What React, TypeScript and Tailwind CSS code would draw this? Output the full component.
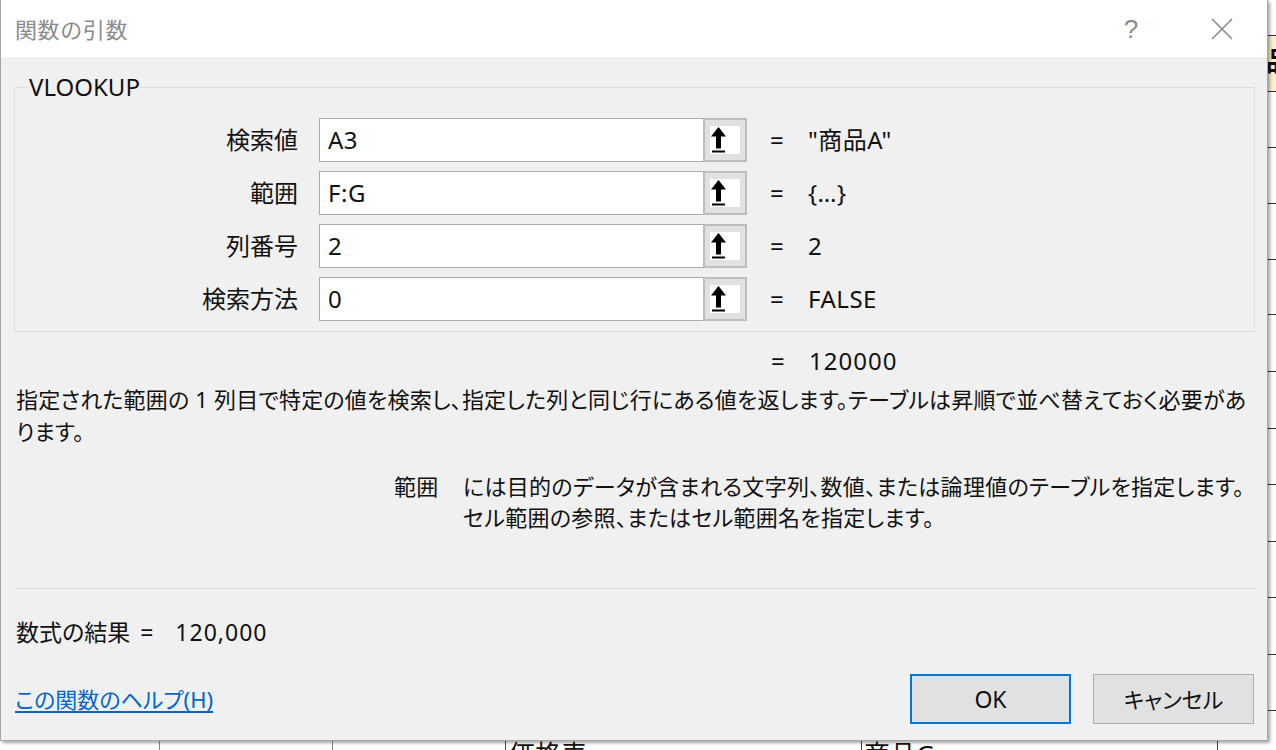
import React from "react";

type ArgRow = {
  label: string;
  value: string;
  result: string;
};

const rows: ArgRow[] = [
  { label: "検索値", value: "A3", result: '"商品A"' },
  { label: "範囲", value: "F:G", result: "{…}" },
  { label: "列番号", value: "2", result: "2" },
  { label: "検索方法", value: "0", result: "FALSE" },
];

// sheet rows behind the dialog (only edges are visible)
const sheetRows = [36, 56, 56, 56, 56, 55, 57, 57, 56, 57, 56, 57, 56, 60];

const RefButton = () => (
  <div className="w-[44px] h-[44px] -my-px -mr-px border-2 border-[#bdbdbd] bg-[#e1e1e1] flex items-center justify-center">
    <svg width="30" height="28" viewBox="0 0 30 28">
      <rect x="0" y="0" width="30" height="28" fill="#fff" />
      <polygon points="8.5,1 1,10.5 16,10.5" fill="#000" />
      <rect x="6" y="9" width="5" height="13.5" fill="#000" />
      <rect x="2" y="24.5" width="13" height="2" fill="#000" />
    </svg>
  </div>
);

const App = () => {
  return (
    <div className="relative w-[1276px] h-[750px] overflow-hidden bg-white font-['Noto_Sans','Noto_Sans_CJK_JP',sans-serif] text-[#111]">
      {/* worksheet behind the dialog */}
      <div className="flex flex-col">
        {sheetRows.map((h, i) => (
          <div
            key={i}
            className="grid grid-cols-[160px_173px_173px_356px_356px_58px] border-b border-[#333]"
            style={{ height: h }}
          >
            <div className="border-r border-[#888]" />
            <div className="border-r border-[#888]" />
            <div className="border-r border-[#444]" />
            <div className="border-r border-[#444] pt-[30px] pl-[3px] text-[26px] leading-none whitespace-nowrap">
              {i === 13 ? "価格表" : ""}
            </div>
            <div className="border-r border-[#444] pt-[30px] pl-[2px] text-[26px] leading-none whitespace-nowrap">
              {i === 13 ? "商品G" : ""}
            </div>
            <div
              className={
                i === 1
                  ? "bg-[#fdf0cf] pl-[48px] pt-[12px] text-[26px] font-bold leading-none whitespace-nowrap"
                  : ""
              }
            >
              {i === 1 ? "品名" : ""}
            </div>
          </div>
        ))}
      </div>

      {/* dialog */}
      <div className="absolute left-0 top-0 w-[1268px] h-[741px] flex flex-col bg-[#f0f0f0] border-l border-r border-b border-[#a6a6a6] shadow-[2px_2px_3px_rgba(0,0,0,0.35)]">
        <div className="h-[57px] shrink-0 bg-white flex items-center pl-[14px] pr-[25px]">
          <span className="text-[22px] text-[#8a8a8a] tracking-[0.6px] font-['Noto_Sans_CJK_JP',sans-serif]">
            関数の引数
          </span>
          <div className="ml-auto flex items-center gap-[51px]">
            <span className="w-[40px] text-center text-[26px] leading-none text-[#8a8a8a] font-['Liberation_Sans',sans-serif]">
              ?
            </span>
            <svg width="40" height="40" viewBox="0 0 40 40">
              <path d="M10 10 L30 30 M30 10 L10 30" stroke="#8a8a8a" strokeWidth="1.6" fill="none" />
            </svg>
          </div>
        </div>

        <div className="flex flex-col px-[13px] flex-1">
          <fieldset className="mt-[15px] w-[1241px] border border-[#dcdcdc] pb-[10px]">
            <legend className="ml-[13px] px-px text-[24px] leading-[30px]">VLOOKUP</legend>
            <div className="flex flex-col gap-[9px] pt-[16px]">
              {rows.map((r) => (
                <div key={r.label} className="flex items-center h-[44px]">
                  <div className="w-[283px] text-right text-[24px] leading-none">{r.label}</div>
                  <div className="ml-[21px] w-[428px] h-[44px] flex items-center border border-[#ababab] bg-white">
                    <div className="flex-1 pl-[8px] text-[24px] leading-none tracking-[0.5px]">{r.value}</div>
                    <RefButton />
                  </div>
                  <div className="ml-[23px] w-[38px] text-[24px] leading-none">=</div>
                  <div className="text-[24px] leading-none tracking-[0.5px] whitespace-nowrap">{r.result}</div>
                </div>
              ))}
            </div>
          </fieldset>

          <div className="mt-[14px] flex pl-[757px] text-[24px] leading-[30px]">
            <span className="w-[38px]">=</span>
            <span className="tracking-[1px]">120000</span>
          </div>

          <p className="mt-[7px] pl-[2px] text-[22px] leading-[32px] tracking-[0.2px] whitespace-nowrap [font-feature-settings:'palt']">
            指定された範囲の 1 列目で特定の値を検索し、指定した列と同じ行にある値を返します。テーブルは昇順で並べ替えておく必要があ
            <br />
            ります。
          </p>

          <div className="mt-[24px] flex pl-[380px] text-[22px] leading-[31px] tracking-[0.3px] [font-feature-settings:'palt']">
            <span className="w-[69px] shrink-0">範囲</span>
            <p className="whitespace-nowrap">
              には目的のデータが含まれる文字列、数値、または論理値のテーブルを指定します。
              <br />
              セル範囲の参照、またはセル範囲名を指定します。
            </p>
          </div>

          <div className="mt-[55px] h-px w-[1242px] bg-[#dcdcdc]" />

          <div className="mt-[28px] flex items-center pl-[2px] text-[23px] leading-[30px] [font-feature-settings:'palt']">
            <span>数式の結果</span>
            <span className="ml-[10px]">=</span>
            <span className="ml-[22px] tracking-[1px]">120,000</span>
          </div>

          <div className="mt-[27px] flex items-center">
            <a
              href="#"
              className="pl-px text-[22px] leading-[30px] text-[#0066cc] underline underline-offset-[3px] [font-feature-settings:'palt']"
            >
              この関数のヘルプ(H)
            </a>
            <div className="ml-auto flex gap-[22px]">
              <button className="w-[161px] h-[50px] border-2 border-[#0078d7] bg-[#e1e1e1] text-[23px]">
                OK
              </button>
              <button className="w-[161px] h-[50px] border border-[#adadad] bg-[#e1e1e1] text-[22px] [font-feature-settings:'palt']">
                キャンセル
              </button>
            </div>
          </div>
        </div>
      </div>
    </div>
  );
};

export default App;
